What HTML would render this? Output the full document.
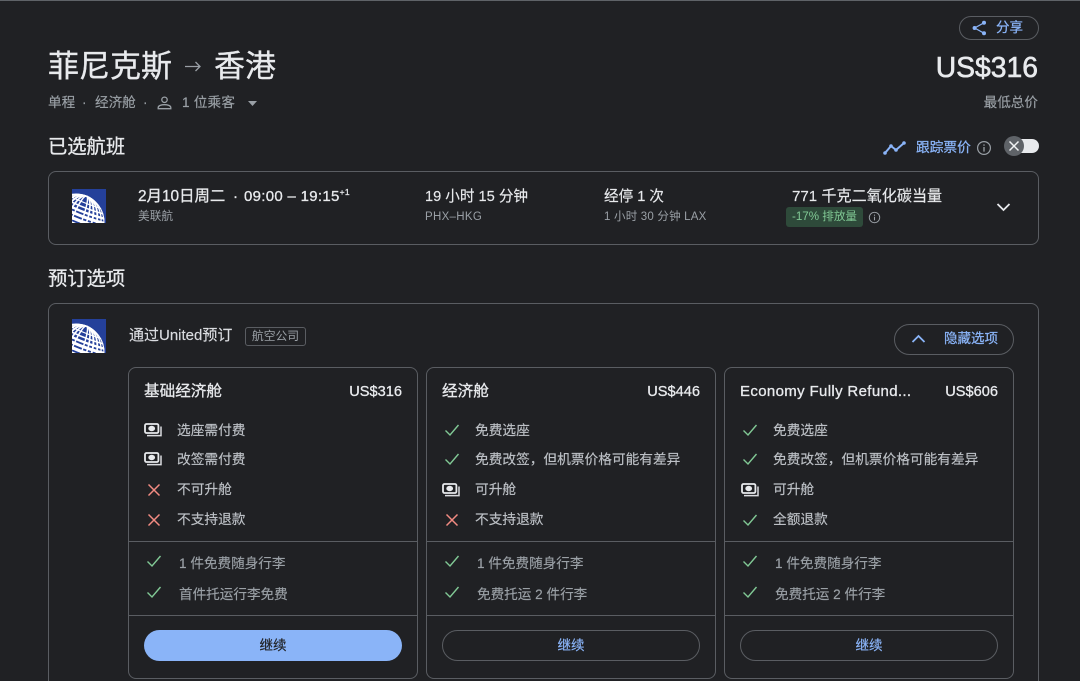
<!DOCTYPE html>
<html lang="zh-CN"><head><meta charset="utf-8"><title>航班预订</title>
<style>
html,body{margin:0;padding:0;background:#202124}
#p{position:relative;width:1080px;height:681px;overflow:hidden;background:#202124;font-family:"Liberation Sans","Noto Sans CJK SC",sans-serif;color:#e8eaed}
#p div,#p span.a,#p svg.a{position:absolute}
.t{white-space:nowrap;line-height:20px;height:20px}
.b{box-sizing:border-box;border:1px solid #5a5d62}
.s{font-size:13.7px;color:#bdc1c6;-webkit-text-stroke:.15px #bdc1c6}
.g{font-size:13.6px;color:#9aa0a6;-webkit-text-stroke:.15px #9aa0a6}
.h{font-size:15.6px;color:#e8eaed;-webkit-text-stroke:.3px #e8eaed}
.pr{font-size:14.6px;color:#e8eaed;-webkit-text-stroke:.3px #e8eaed}
.l{height:1px;background:#5a5d62}
.c{text-align:center;font-size:13.5px;color:#8ab4f8;line-height:29px;-webkit-text-stroke:.2px #8ab4f8}
.blue{color:#8ab4f8;-webkit-text-stroke:.25px #8ab4f8}
.m{-webkit-text-stroke:.3px #e8eaed}
</style></head><body>
<svg width="0" height="0" style="position:absolute">
<defs><clipPath id="gl"><circle cx="4" cy="33" r="28.500"/></clipPath><clipPath id="bx"><rect width="34" height="34"/></clipPath></defs>
<symbol id="m" viewBox="0 0 18 14"><rect x="1" y="1" width="13.4" height="9" rx="1.500" fill="none" stroke="#e8eaed" stroke-width="1.800"/><ellipse cx="7.700" cy="5.500" rx="3.400" ry="2.700" fill="#e8eaed"/><path d="M17 3.500V12.600H3" fill="none" stroke="#dadce0" stroke-width="1.500"/></symbol>
<symbol id="k" viewBox="0 0 16 14"><path d="M1.500 7.500L6 12L14.500 2" fill="none" stroke="#81c995" stroke-width="1.400"/></symbol>
<symbol id="x" viewBox="0 0 14 14"><path d="M1.500 1.500L12.500 12.500M12.500 1.500L1.500 12.500" fill="none" stroke="#f28b82" stroke-width="1.500"/></symbol>
<symbol id="i" viewBox="0 0 16 16"><circle cx="8" cy="8" r="6.400" fill="none" stroke="#9aa0a6" stroke-width="1.200"/><path d="M8 7V11.600M8 4.400V5.800" stroke="#9aa0a6" stroke-width="1.300"/></symbol>
<symbol id="u" viewBox="0 0 34 34"><rect width="34" height="34" fill="#24409a"/>
<g clip-path="url(#bx)"><g clip-path="url(#gl)"><g transform="rotate(22 4 33)" fill="none" stroke="#fff">
<circle cx="4" cy="33" r="28" stroke-width="1.300"/>
<ellipse cx="4" cy="33" rx="5" ry="28" stroke-width="1.500"/>
<ellipse cx="4" cy="33" rx="10" ry="28" stroke-width="1.700"/>
<ellipse cx="4" cy="33" rx="15" ry="28" stroke-width="1.900"/>
<ellipse cx="4" cy="33" rx="20" ry="28" stroke-width="1.800"/>
<ellipse cx="4" cy="33" rx="24.500" ry="28" stroke-width="1.300"/>
<path d="M-30 9Q4 15 38 9" stroke-width="1.200"/>
<path d="M-30 13.500Q4 19.500 38 13.500" stroke-width="1.600"/>
<path d="M-30 18Q4 24 38 18" stroke-width="2.400"/>
<path d="M-30 22.500Q4 28.500 38 22.500" stroke-width="3"/>
<path d="M-30 27.500Q4 33.500 38 27.500" stroke-width="3.200"/>
<path d="M-30 32.500Q4 38.500 38 32.500" stroke-width="3.200"/>
<path d="M-30 37.500Q4 43.500 38 37.500" stroke-width="3"/>
</g></g></g></symbol>
</svg>
<div id="p">
<div style="left:0;top:0;width:1080px;height:1px;background:#5f6368"></div>

<div class="b" style="left:959px;top:16px;width:80px;height:24px;border-radius:12px"></div>
<svg class="a" style="left:972px;top:20px" width="15" height="16" viewBox="0 0 15 16"><g fill="#8ab4f8"><circle cx="12" cy="2.800" r="2"/><circle cx="2.600" cy="8" r="2"/><circle cx="12" cy="13.200" r="2"/></g><path d="M12 2.800L2.600 8L12 13.200" fill="none" stroke="#8ab4f8" stroke-width="1.200"/></svg>
<div class="t blue" style="left:996px;top:18px;font-size:13.500px">分享</div>

<div class="t m" style="left:48px;top:47px;font-size:31px;line-height:40px;height:40px">菲尼克斯</div>
<svg class="a" style="left:184px;top:59px" width="18" height="16" viewBox="0 0 18 16"><path d="M1 7.500H16M11.500 3L16 7.500L11.500 12" fill="none" stroke="#9aa0a6" stroke-width="1.300"/></svg>
<div class="t m" style="left:214px;top:47px;font-size:31px;line-height:40px;height:40px">香港</div>
<div class="t" style="right:42px;top:47px;font-size:28.300px;line-height:40px;height:40px;-webkit-text-stroke:.6px #e8eaed">US$316</div>

<div class="t g" style="left:48px;top:93px">单程</div>
<div class="t g" style="left:82px;top:93px">·</div>
<div class="t g" style="left:95px;top:93px">经济舱</div>
<div class="t g" style="left:143px;top:93px">·</div>
<svg class="a" style="left:157px;top:96px" width="15" height="14" viewBox="0 0 15 14"><circle cx="7.500" cy="3.800" r="2.700" fill="none" stroke="#9aa0a6" stroke-width="1.300"/><path d="M1.200 12.700V11.500C1.200 9.600 4.500 8.700 7.500 8.700S13.800 9.600 13.800 11.500V12.700Z" fill="none" stroke="#9aa0a6" stroke-width="1.300"/></svg>
<div class="t g" style="left:182px;top:93px;letter-spacing:.2px">1 位乘客</div>
<svg class="a" style="left:248px;top:101px" width="9" height="5" viewBox="0 0 9 5"><path d="M0 0H9L4.500 5Z" fill="#9aa0a6"/></svg>
<div class="t g" style="right:42px;top:93px">最低总价</div>

<div class="t m" style="left:48px;top:138px;font-size:19.300px">已选航班</div>
<svg class="a" style="left:883px;top:141px" width="23" height="14" viewBox="0 0 23 14"><path d="M2 12L8 5L13 9L21 2" fill="none" stroke="#8ab4f8" stroke-width="2"/><g fill="#8ab4f8"><circle cx="2" cy="12" r="1.800"/><circle cx="8" cy="5" r="1.800"/><circle cx="13" cy="9" r="1.800"/><circle cx="21" cy="2" r="1.800"/></g></svg>
<div class="t blue" style="left:916px;top:138px;font-size:13.700px">跟踪票价</div>
<svg class="a" style="left:976px;top:140px" width="16" height="16"><use href="#i"/></svg>
<div style="left:1008px;top:139px;width:31px;height:14px;border-radius:7px;background:#e8eaed"></div>
<div style="left:1004px;top:136px;width:20px;height:20px;border-radius:50%;background:#5f6368"></div>
<svg class="a" style="left:1008px;top:140px" width="12" height="12" viewBox="0 0 12 12"><path d="M1.500 1.500L10.500 10.500M10.500 1.500L1.500 10.500" stroke="#f1f3f4" stroke-width="1.500"/></svg>

<div class="b" style="left:48px;top:171px;width:991px;height:74px;border-radius:8px"></div>
<svg class="a" style="left:72px;top:189px" width="34" height="34"><use href="#u"/></svg>
<div class="t m" style="left:138px;top:187px;font-size:15.400px">2月10日周二</div>
<div class="t m" style="left:233px;top:187px;font-size:15px">·</div>
<div class="t m" style="left:244px;top:187px;font-size:15px;letter-spacing:.3px">09:00 – 19:15<sup style="font-size:8.500px;line-height:0;vertical-align:6px">+1</sup></div>
<div class="t" style="left:138px;top:207px;font-size:11.700px;color:#9aa0a6">美联航</div>
<div class="t" style="left:425px;top:187px;font-size:14.600px;-webkit-text-stroke:.15px #e8eaed">19 小时 15 分钟</div>
<div class="t" style="left:425px;top:207px;font-size:11.500px;color:#9aa0a6;letter-spacing:.3px">PHX–HKG</div>
<div class="t" style="left:604px;top:187px;font-size:14.600px;-webkit-text-stroke:.15px #e8eaed">经停 1 次</div>
<div class="t" style="left:604px;top:207px;font-size:11.500px;color:#9aa0a6;letter-spacing:.2px">1 小时 30 分钟 LAX</div>
<div class="t" style="left:792px;top:187px;font-size:15.100px;-webkit-text-stroke:.15px #e8eaed">771 千克二氧化碳当量</div>
<div class="t" style="left:786px;top:207px;width:77px;height:20px;border-radius:3px;background:#2e4a3a;color:#81c995;font-size:11.600px;text-align:center">-17% 排放量</div>
<svg class="a" style="left:868px;top:211px" width="13" height="13"><use href="#i"/></svg>
<svg class="a" style="left:996px;top:202px" width="15" height="10" viewBox="0 0 15 10"><path d="M1.500 2L7.500 8L13.500 2" fill="none" stroke="#e8eaed" stroke-width="1.800"/></svg>

<div class="t m" style="left:48px;top:270px;font-size:19.300px">预订选项</div>
<div class="b" style="left:48px;top:303px;width:991px;height:400px;border-radius:8px"></div>
<svg class="a" style="left:72px;top:319px" width="34" height="34"><use href="#u"/></svg>
<div class="t" style="left:129px;top:326px;font-size:15px;color:#dadce0;-webkit-text-stroke:.15px #dadce0">通过United预订</div>
<div class="t b" style="left:245px;top:327px;width:61px;height:19px;border-radius:3px;font-size:11.800px;line-height:17px;color:#9aa0a6;text-align:center">航空公司</div>
<div class="b" style="left:894px;top:324px;width:120px;height:31px;border-radius:16px"></div>
<svg class="a" style="left:911px;top:334px" width="15" height="10" viewBox="0 0 15 10"><path d="M1.500 8L7.500 2L13.500 8" fill="none" stroke="#8ab4f8" stroke-width="1.800"/></svg>
<div class="t blue" style="left:944px;top:329px;font-size:13.500px">隐藏选项</div>

<!-- card 1 -->
<div class="b" style="left:128px;top:367px;width:290px;height:312px;border-radius:8px"></div>
<div class="t h" style="left:144px;top:382px">基础经济舱</div>
<div class="t pr" style="right:678px;top:382px">US$316</div>
<svg class="a" style="left:144px;top:423px" width="18" height="14"><use href="#m"/></svg>
<div class="t s" style="left:177px;top:421px">选座需付费</div>
<svg class="a" style="left:144px;top:452px" width="18" height="14"><use href="#m"/></svg>
<div class="t s" style="left:177px;top:450px">改签需付费</div>
<svg class="a" style="left:147px;top:483px" width="14" height="14"><use href="#x"/></svg>
<div class="t s" style="left:177px;top:480px">不可升舱</div>
<svg class="a" style="left:147px;top:513px" width="14" height="14"><use href="#x"/></svg>
<div class="t s" style="left:177px;top:510px">不支持退款</div>
<div class="l" style="left:129px;top:541px;width:288px"></div>
<svg class="a" style="left:146px;top:554px" width="16" height="14"><use href="#k"/></svg>
<div class="t g" style="left:179px;top:554px">1 件免费随身行李</div>
<svg class="a" style="left:146px;top:585px" width="16" height="14"><use href="#k"/></svg>
<div class="t g" style="left:179px;top:585px">首件托运行李免费</div>
<div class="l" style="left:129px;top:615px;width:288px"></div>
<div class="c" style="left:144px;top:630px;width:258px;height:31px;border-radius:16px;background:#8ab4f8;color:#202124;line-height:31px;-webkit-text-stroke:.2px #202124">继续</div>

<!-- card 2 -->
<div class="b" style="left:426px;top:367px;width:290px;height:312px;border-radius:8px"></div>
<div class="t h" style="left:442px;top:382px">经济舱</div>
<div class="t pr" style="right:380px;top:382px">US$446</div>
<svg class="a" style="left:444px;top:423px" width="16" height="14"><use href="#k"/></svg>
<div class="t s" style="left:475px;top:421px">免费选座</div>
<svg class="a" style="left:444px;top:452px" width="16" height="14"><use href="#k"/></svg>
<div class="t s" style="left:475px;top:450px">免费改签，但机票价格可能有差异</div>
<svg class="a" style="left:442px;top:483px" width="18" height="14"><use href="#m"/></svg>
<div class="t s" style="left:475px;top:480px">可升舱</div>
<svg class="a" style="left:445px;top:513px" width="14" height="14"><use href="#x"/></svg>
<div class="t s" style="left:475px;top:510px">不支持退款</div>
<div class="l" style="left:427px;top:541px;width:288px"></div>
<svg class="a" style="left:444px;top:554px" width="16" height="14"><use href="#k"/></svg>
<div class="t g" style="left:477px;top:554px">1 件免费随身行李</div>
<svg class="a" style="left:444px;top:585px" width="16" height="14"><use href="#k"/></svg>
<div class="t g" style="left:477px;top:585px">免费托运 2 件行李</div>
<div class="l" style="left:427px;top:615px;width:288px"></div>
<div class="c b" style="left:442px;top:630px;width:258px;height:31px;border-radius:16px">继续</div>

<!-- card 3 -->
<div class="b" style="left:724px;top:367px;width:290px;height:312px;border-radius:8px"></div>
<div class="t h" style="left:740px;top:382px;font-size:15px;letter-spacing:.35px">Economy Fully Refund...</div>
<div class="t pr" style="right:82px;top:382px">US$606</div>
<svg class="a" style="left:742px;top:423px" width="16" height="14"><use href="#k"/></svg>
<div class="t s" style="left:773px;top:421px">免费选座</div>
<svg class="a" style="left:742px;top:452px" width="16" height="14"><use href="#k"/></svg>
<div class="t s" style="left:773px;top:450px">免费改签，但机票价格可能有差异</div>
<svg class="a" style="left:741px;top:483px" width="18" height="14"><use href="#m"/></svg>
<div class="t s" style="left:773px;top:480px">可升舱</div>
<svg class="a" style="left:742px;top:513px" width="16" height="14"><use href="#k"/></svg>
<div class="t s" style="left:773px;top:510px">全额退款</div>
<div class="l" style="left:725px;top:541px;width:288px"></div>
<svg class="a" style="left:742px;top:554px" width="16" height="14"><use href="#k"/></svg>
<div class="t g" style="left:775px;top:554px">1 件免费随身行李</div>
<svg class="a" style="left:742px;top:585px" width="16" height="14"><use href="#k"/></svg>
<div class="t g" style="left:775px;top:585px">免费托运 2 件行李</div>
<div class="l" style="left:725px;top:615px;width:288px"></div>
<div class="c b" style="left:740px;top:630px;width:258px;height:31px;border-radius:16px">继续</div>
</div>
</body></html>
